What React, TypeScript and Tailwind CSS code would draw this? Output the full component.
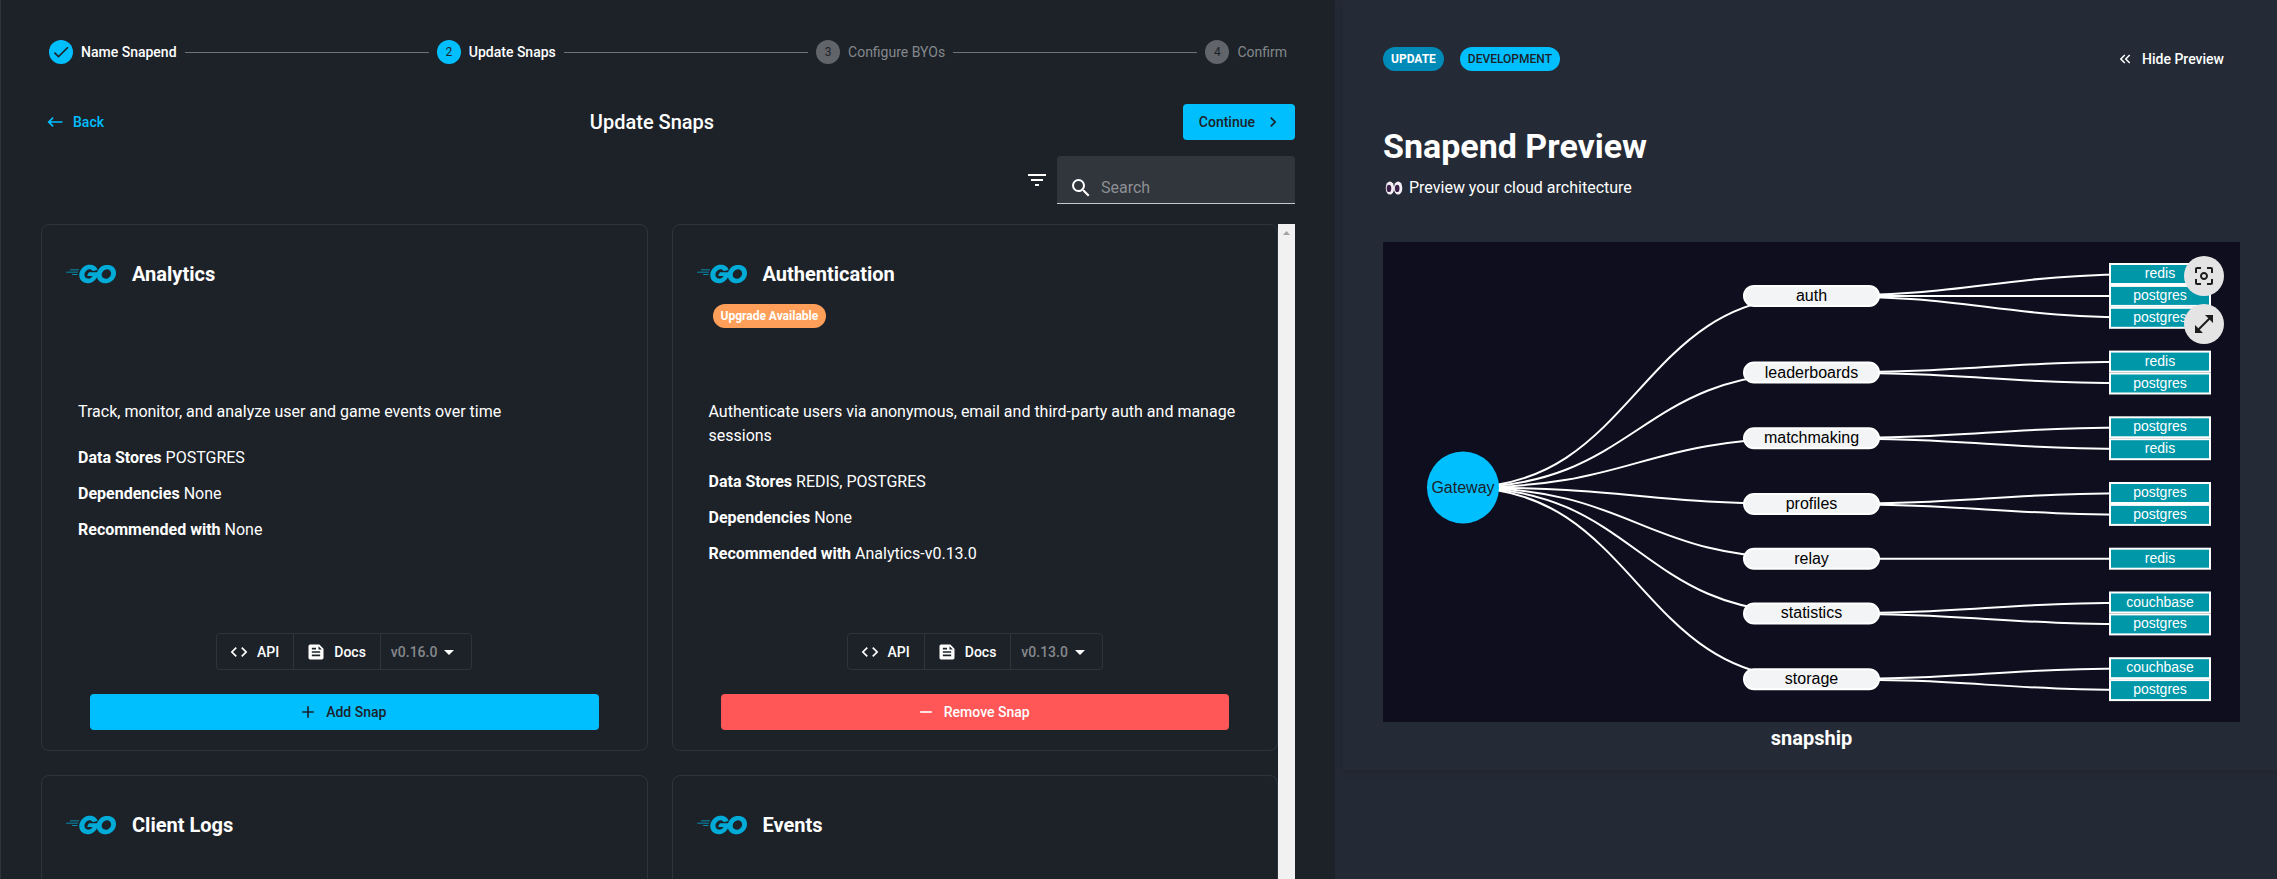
import React from "react";
import {
  MdAdd,
  MdArrowDropDown,
  MdCenterFocusWeak,
  MdCheck,
  MdChevronRight,
  MdCode,
  MdFeed,
  MdFilterList,
  MdKeyboardBackspace,
  MdKeyboardDoubleArrowLeft,
  MdOpenInFull,
  MdRemove,
  MdSearch,
} from "react-icons/md";
import { SiGo } from "react-icons/si";

type Snap = {
  name: string;
  upgrade?: boolean;
  description: string;
  stores: string;
  dependencies: string;
  recommended: string;
  version: string;
  added: boolean;
};

const snaps: Snap[] = [
  {
    name: "Analytics",
    description: "Track, monitor, and analyze user and game events over time",
    stores: "POSTGRES",
    dependencies: "None",
    recommended: "None",
    version: "v0.16.0",
    added: false,
  },
  {
    name: "Authentication",
    upgrade: true,
    description: "Authenticate users via anonymous, email and third-party auth and manage sessions",
    stores: "REDIS, POSTGRES",
    dependencies: "None",
    recommended: "Analytics-v0.13.0",
    version: "v0.13.0",
    added: true,
  },
  {
    name: "Client Logs",
    description: "",
    stores: "",
    dependencies: "",
    recommended: "",
    version: "",
    added: false,
  },
  {
    name: "Events",
    description: "",
    stores: "",
    dependencies: "",
    recommended: "",
    version: "",
    added: false,
  },
];

const steps = ["Name Snapend", "Update Snaps", "Configure BYOs", "Confirm"];
const currentStep = 1;

function Stepper() {
  return (
    <ol className="flex items-center px-2 text-sm leading-6">
      {steps.map((label, i) => {
        const reached = i <= currentStep;
        return (
          <React.Fragment key={label}>
            {i > 0 && <li aria-hidden className="mx-2 h-px flex-1 bg-[#6f7376]" />}
            <li className="flex items-center gap-2">
              <span
                className={
                  reached
                    ? "flex size-6 items-center justify-center rounded-full bg-[#00bfff] text-xs text-[#1d2229]"
                    : "flex size-6 items-center justify-center rounded-full bg-[#616468] text-xs text-[#1d2229]"
                }
              >
                {i < currentStep ? <MdCheck className="size-5" /> : i + 1}
              </span>
              <span className={reached ? "font-medium text-white" : "text-[#85888b]"}>{label}</span>
            </li>
          </React.Fragment>
        );
      })}
    </ol>
  );
}

function Fact({ label, value }: { label: string; value: string }) {
  return (
    <p className="mt-3">
      <strong className="font-bold">{label}</strong> {value}
    </p>
  );
}

function SnapCard({ snap }: { snap: Snap }) {
  return (
    <article className="flex h-[527px] flex-col rounded-lg border border-[#2e343c] px-6 pt-6 pb-5">
      <header className="flex h-[50px] items-center gap-4">
        <SiGo className="size-[50px] text-[#00acd7]" />
        <h2 className="text-xl font-bold text-white">{snap.name}</h2>
      </header>
      <div className="h-[101px] px-4 pt-1">
        {snap.upgrade && (
          <span className="inline-block rounded-full bg-[#ff9f59] px-2 text-xs leading-6 font-bold text-white">
            Upgrade Available
          </span>
        )}
      </div>
      {snap.description && (
        <>
          <div className="flex-1 px-3 leading-6 text-white">
            <p className="mb-[22px]">{snap.description}</p>
            <Fact label="Data Stores" value={snap.stores} />
            <Fact label="Dependencies" value={snap.dependencies} />
            <Fact label="Recommended with" value={snap.recommended} />
          </div>
          <div className="flex h-[37px] self-center rounded border border-[#2e343c] text-sm font-medium text-white">
            <button className="flex items-center gap-2 border-r border-[#2e343c] pr-[14px] pl-3">
              <MdCode className="size-5" />
              API
            </button>
            <button className="flex items-center gap-2 border-r border-[#2e343c] pr-[14px] pl-3">
              <MdFeed className="size-5" />
              Docs
            </button>
            <button className="flex items-center px-[10px] text-[#85888b]">
              {snap.version}
              <MdArrowDropDown className="size-6 text-white" />
            </button>
          </div>
          <button
            className={
              snap.added
                ? "mx-6 mt-6 flex h-9 items-center justify-center gap-2 rounded bg-[#ff5757] pr-1 text-sm font-medium text-white"
                : "mx-6 mt-6 flex h-9 items-center justify-center gap-2 rounded bg-[#00bfff] pr-1 text-sm font-medium text-[#1d2229]"
            }
          >
            {snap.added ? <MdRemove className="size-5" /> : <MdAdd className="size-5" />}
            {snap.added ? "Remove Snap" : "Add Snap"}
          </button>
        </>
      )}
    </article>
  );
}

const services = [
  { name: "auth", stores: ["redis", "postgres", "postgres"] },
  { name: "leaderboards", stores: ["redis", "postgres"] },
  { name: "matchmaking", stores: ["postgres", "redis"] },
  { name: "profiles", stores: ["postgres", "postgres"] },
  { name: "relay", stores: ["redis"] },
  { name: "statistics", stores: ["couchbase", "postgres"] },
  { name: "storage", stores: ["couchbase", "postgres"] },
];

const ROW = 21.9;
let row = 0;
const nodes = services.map((s) => {
  const leaves = s.stores.map((store, i) => ({ store, y: 32 + ROW * (row + i) }));
  row += s.stores.length + 1;
  return { name: s.name, leaves, y: (leaves[0].y + leaves[leaves.length - 1].y) / 2 };
});

const GATEWAY = { x: 80, y: 245.5 };
const SERVICE_X = 428.5;
const STORE_X = 777;

function link(x1: number, y1: number, x2: number, y2: number) {
  const mid = (x1 + x2) / 2;
  return `M${x1},${y1}C${mid},${y1} ${mid},${y2} ${x2},${y2}`;
}

function Architecture() {
  return (
    <svg viewBox="0 0 857 480" className="block w-full bg-[#0f0e1f]" role="img" aria-label="Cloud architecture">
      <g fill="none" stroke="#fff" strokeWidth="2">
        {nodes.map((n) => (
          <g key={n.name}>
            <path d={link(GATEWAY.x, GATEWAY.y, SERVICE_X, n.y)} />
            {n.leaves.map((l) => (
              <path key={l.y} d={link(SERVICE_X, n.y, STORE_X, l.y)} />
            ))}
          </g>
        ))}
      </g>
      <g textAnchor="middle" className="font-['Liberation_Sans',sans-serif]">
        <circle cx={GATEWAY.x} cy={GATEWAY.y} r="36" fill="#00bfff" />
        <text x={GATEWAY.x} y={GATEWAY.y + 5} fontSize="16" fill="#1d2229">
          Gateway
        </text>
        {nodes.map((n) => (
          <g key={n.name}>
            <rect x="361" y={n.y - 10} width="135" height="20" rx="10" fill="#f3f4f6" stroke="#fff" strokeWidth="2" />
            <text x={SERVICE_X} y={n.y + 5} fontSize="16" fill="#000">
              {n.name}
            </text>
            {n.leaves.map((l) => (
              <g key={l.y}>
                <rect x="727" y={l.y - 10} width="100" height="20" fill="#0097a9" stroke="#fff" strokeWidth="2" />
                <text x={STORE_X} y={l.y + 4} fontSize="14" fill="#fff">
                  {l.store}
                </text>
              </g>
            ))}
          </g>
        ))}
      </g>
    </svg>
  );
}

function Eyes() {
  return (
    <svg viewBox="0 0 18 14" className="mx-0.5 h-[14px] w-[18px]" aria-hidden>
      <ellipse cx="4.9" cy="7" rx="4.2" ry="6.6" fill="#f5eef5" />
      <ellipse cx="13.1" cy="7" rx="4.2" ry="6.6" fill="#f5eef5" />
      <ellipse cx="4" cy="7.4" rx="2.3" ry="3.7" fill="#3b2147" />
      <ellipse cx="12.2" cy="7.4" rx="2.3" ry="3.7" fill="#3b2147" />
    </svg>
  );
}

export default function App() {
  return (
    <div className="grid h-screen grid-cols-[1335fr_942fr] overflow-hidden bg-[#1d2229] font-[Roboto,sans-serif] text-base text-white">
      <main className="flex min-h-0 min-w-0 flex-col border-l border-[#2e343c] pt-10 pr-10 pl-10">
        <Stepper />
        <div className="mt-10 grid grid-cols-3 items-center">
          <button className="flex items-center gap-2 justify-self-start pl-1 text-sm font-medium text-[#00bfff]">
            <MdKeyboardBackspace className="size-5" />
            Back
          </button>
          <h1 className="justify-self-center pr-8 text-xl font-medium">Update Snaps</h1>
          <button className="flex h-9 items-center gap-2 justify-self-end rounded bg-[#00bfff] pr-3 pl-4 text-sm font-medium text-[#1d2229]">
            Continue
            <MdChevronRight className="size-5" />
          </button>
        </div>
        <div className="mt-4 flex items-center justify-end gap-2">
          <button aria-label="Filter">
            <MdFilterList className="size-6" />
          </button>
          <label className="flex h-12 w-[238px] items-end gap-2 rounded-t border-b border-[#c5c7c9] bg-[#31353c] pb-[3px] pl-3">
            <MdSearch className="size-6 shrink-0" />
            <input
              type="text"
              aria-label="Search"
              placeholder="Search"
              className="w-full min-w-0 bg-transparent outline-none placeholder:text-[#8d9093]"
            />
          </label>
        </div>
        <div className="mt-5 flex min-h-0 flex-1 overflow-hidden">
          <div className="grid flex-1 grid-cols-2 content-start gap-6">
            {snaps.map((s) => (
              <SnapCard key={s.name} snap={s} />
            ))}
          </div>
          <div className="flex w-[17px] justify-center bg-[#f1f1f1] pt-[7px]" aria-hidden>
            <svg viewBox="0 0 7 4" className="h-1 w-[7px]">
              <path d="M3.5 0L7 4H0z" fill="#a3a3a3" />
            </svg>
          </div>
        </div>
      </main>
      <aside className="min-w-0 bg-[#242a35] pl-2">
        <section className="bg-[#242b36] pt-[47px] pr-[37px] pb-[18px] pl-10 shadow-[0_2px_6px_rgba(0,0,0,0.15)]">
          <div className="flex items-center gap-4 text-xs leading-6">
            <span className="rounded-full bg-[#008ab8] px-2 font-bold">UPDATE</span>
            <span className="rounded-full bg-[#00bfff] px-2 font-medium text-[#1d2229]">DEVELOPMENT</span>
            <button className="mr-4 ml-auto flex items-center gap-2 text-sm font-medium">
              <MdKeyboardDoubleArrowLeft className="size-[18px]" />
              Hide Preview
            </button>
          </div>
          <h2 className="mt-[55px] text-[34px] leading-10 font-bold">Snapend Preview</h2>
          <p className="mt-[10px] flex items-center gap-1 leading-6">
            <Eyes />
            Preview your cloud architecture
          </p>
          <div className="relative mt-[42px]">
            <Architecture />
            <div className="absolute top-[14px] right-4 flex flex-col gap-2 text-[#1d1d1d]">
              <button aria-label="Center" className="flex size-10 items-center justify-center rounded-full bg-[#e4e4e4]">
                <MdCenterFocusWeak className="size-6" />
              </button>
              <button aria-label="Expand" className="flex size-10 items-center justify-center rounded-full bg-[#e4e4e4]">
                <MdOpenInFull className="size-6" />
              </button>
            </div>
          </div>
          <p className="mt-0.5 text-center text-xl font-bold">snapship</p>
        </section>
      </aside>
    </div>
  );
}
